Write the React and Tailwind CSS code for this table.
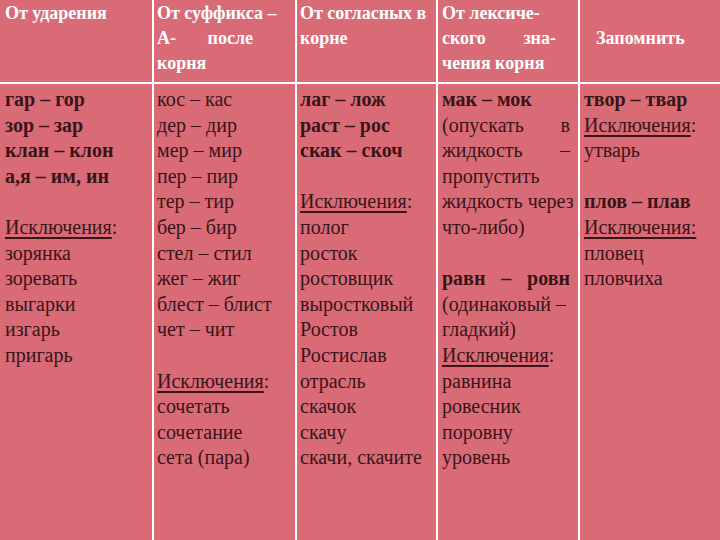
import React from 'react';

// each line: { t: text, b: bold, u: underline "Исключения", j: justify words }
const columns = [
  [
    { t: 'гар – гор', b: true },
    { t: 'зор – зар', b: true },
    { t: 'клан – клон', b: true },
    { t: 'а,я – им, ин', b: true },
    { t: '' },
    { u: true },
    { t: 'зорянка' },
    { t: 'зоревать' },
    { t: 'выгарки' },
    { t: 'изгарь' },
    { t: 'пригарь' },
  ],
  [
    { t: 'кос – кас' },
    { t: 'дер – дир' },
    { t: 'мер – мир' },
    { t: 'пер – пир' },
    { t: 'тер – тир' },
    { t: 'бер – бир' },
    { t: 'стел – стил' },
    { t: 'жег – жиг' },
    { t: 'блест – блист' },
    { t: 'чет – чит' },
    { t: '' },
    { u: true },
    { t: 'сочетать' },
    { t: 'сочетание' },
    { t: 'сета (пара)' },
  ],
  [
    { t: 'лаг – лож', b: true },
    { t: 'раст – рос', b: true },
    { t: 'скак – скоч', b: true },
    { t: '' },
    { u: true },
    { t: 'полог' },
    { t: 'росток' },
    { t: 'ростовщик' },
    { t: 'выростковый' },
    { t: 'Ростов' },
    { t: 'Ростислав' },
    { t: 'отрасль' },
    { t: 'скачок' },
    { t: 'скачу' },
    { t: 'скачи, скачите' },
  ],
  [
    { t: 'мак – мок', b: true },
    { j: ['(опускать', 'в'] },
    { j: ['жидкость', '–'] },
    { t: 'пропустить' },
    { t: 'жидкость через' },
    { t: 'что-либо)' },
    { t: '' },
    { j: ['равн', '–', 'ровн'], b: true },
    { t: '(одинаковый –' },
    { t: 'гладкий)' },
    { u: true },
    { t: 'равнина' },
    { t: 'ровесник' },
    { t: 'поровну' },
    { t: 'уровень' },
  ],
  [
    { t: 'твор – твар', b: true },
    { u: true },
    { t: 'утварь' },
    { t: '' },
    { t: 'плов – плав', b: true },
    { u: true, full: true },
    { t: 'пловец' },
    { t: 'пловчиха' },
  ],
];

const widths = ['w-[152px]', 'w-[141px]', 'w-[139px]', 'w-[140px]', 'flex-1'];
const pads = ['pl-[5px]', 'pl-[3px]', 'pl-[3px]', 'pl-[4px]', 'pl-[4px]'];

const Line = ({ l }) => {
  const weight = l.b ? 'font-bold' : '';
  if (l.u) {
    return (
      <div className="h-[25.6px] whitespace-nowrap">
        {l.full ? (
          <span className="underline decoration-[1.5px] underline-offset-[3px]">Исключения:</span>
        ) : (
          <><span className="underline decoration-[1.5px] underline-offset-[3px]">Исключения</span>:</>
        )}
      </div>
    );
  }
  if (l.j) {
    return (
      <div className={`h-[25.6px] flex justify-between ${weight}`}>
        {l.j.map((w, i) => <span key={i}>{w}</span>)}
      </div>
    );
  }
  return <div className={`h-[25.6px] whitespace-nowrap ${weight}`}>{l.t}</div>;
};

const Cell = ({ w, className = '', children }) => (
  <div className={`${w} shrink-0 bg-[#d96b77] ${className}`}>{children}</div>
);

export default function App() {
  return (
    <div className="w-[720px] h-[540px] bg-white flex flex-col gap-[2px] overflow-hidden font-[family-name:'Liberation_Serif',serif]">
      {/* header row */}
      <div className="h-[82px] flex gap-[2px] text-white font-bold text-[18px] leading-[25px]">
        <Cell w={widths[0]} className="pl-[5px] pt-[1px]">От ударения</Cell>
        <Cell w={widths[1]} className="pl-[3px] pt-[1px] whitespace-nowrap">
          <div>От суффикса –</div>
          <div className="flex justify-between pr-[42px]"><span>А-</span><span>после</span></div>
          <div>корня</div>
        </Cell>
        <Cell w={widths[2]} className="pl-[3px] pt-[1px] whitespace-nowrap">
          <div>От согласных в</div>
          <div>корне</div>
        </Cell>
        <Cell w={widths[3]} className="pl-[4px] pt-[1px] whitespace-nowrap">
          <div>От лексиче-</div>
          <div className="flex justify-between pr-[22px]"><span>ского</span><span>зна-</span></div>
          <div>чения корня</div>
        </Cell>
        <Cell w={widths[4]} className="flex items-center pl-[16px] pb-[6px]">Запомнить</Cell>
      </div>
      {/* body row */}
      <div className="flex-1 flex gap-[2px] text-[#3a1417] text-[20px] leading-[25.6px]">
        {columns.map((col, i) => (
          <Cell key={i} w={widths[i]} className={`pt-[3px] pr-[8px] ${pads[i]}`}>
            {col.map((l, k) => <Line key={k} l={l} />)}
          </Cell>
        ))}
      </div>
    </div>
  );
}
